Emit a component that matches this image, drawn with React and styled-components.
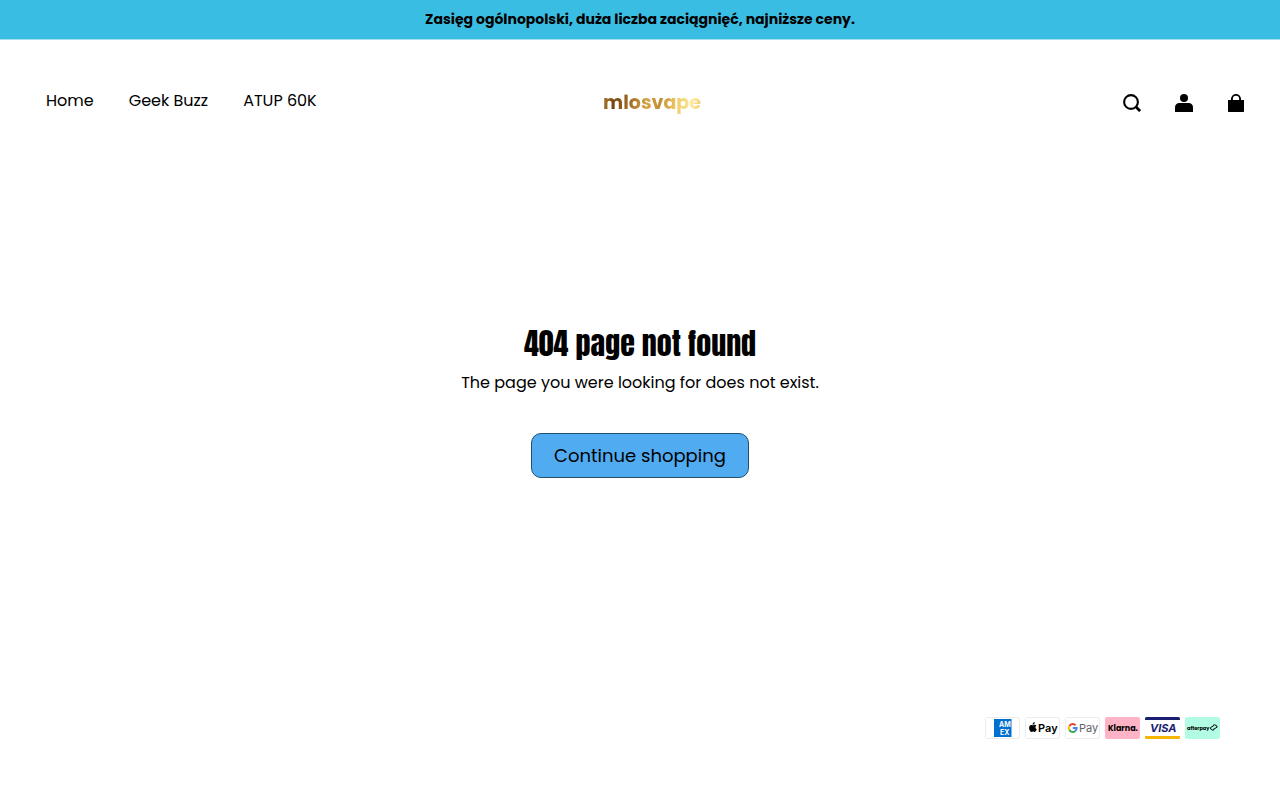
import React from "react";
import styled, { createGlobalStyle } from "styled-components";

const links = ["Home", "Geek Buzz", "ATUP 60K"];

export default function App() {
  return (
    <>
      <GlobalStyle />
      <Announcement>Zasięg ogólnopolski, duża liczba zaciągnięć, najniższe ceny.</Announcement>
      <Header>
        <Nav>
          {links.map((name) => (
            <NavLink href="#" key={name}>
              {name}
            </NavLink>
          ))}
        </Nav>
        <Logo href="#">mlosvape</Logo>
        <Icons>
          <IconButton type="button" aria-label="Search">
            <svg width="18" height="18" viewBox="0 0 18 18" fill="none" stroke="#000">
              <circle cx="8" cy="8" r="6.9" strokeWidth="2.1" />
              <path d="M12.6 12.6L17.1 17.1" strokeWidth="2.8" />
            </svg>
          </IconButton>
          <IconButton type="button" aria-label="Account">
            <svg width="18" height="18" viewBox="0 0 18 18">
              <circle cx="9" cy="4" r="4" />
              <path d="M0 18v-4.6C0 10.8 1.8 9 4.4 9h9.2C16.2 9 18 10.8 18 13.4V18z" />
            </svg>
          </IconButton>
          <IconButton type="button" aria-label="Cart">
            <svg width="18" height="18" viewBox="0 0 18 18">
              <path d="M4.9 7V5a4.1 4.1 0 0 1 8.2 0V7" fill="none" stroke="#000" strokeWidth="1.9" />
              <path d="M1 6h16v11.2a.8.8 0 0 1-.8.8H1.8a.8.8 0 0 1-.8-.8z" />
            </svg>
          </IconButton>
        </Icons>
      </Header>
      <Main>
        <Title>404 page not found</Title>
        <Message>The page you were looking for does not exist.</Message>
        <ShopButton type="button">Continue shopping</ShopButton>
      </Main>
      <Footer>
        <Card viewBox="0 0 35 22" role="img" aria-label="American Express">
          <CardFrame />
          <path d="M9 2h17.5v18H9z" fill="#006fcf" />
          <CardText x="14" y="10" size="7" fill="#fff">AM</CardText>
          <CardText x="15" y="18" size="7" fill="#fff">EX</CardText>
        </Card>
        <Card viewBox="0 0 35 22" role="img" aria-label="Apple Pay">
          <CardFrame />
          <path d="M8.6 8.2c.9-.5 2-.5 2.8.4-1.4.9-1.2 3 .4 3.7-.5 1.5-1.5 2.9-2.6 2.6-.8-.4-1.3-.4-2.1 0C5.3 15.5 3.7 12 4.2 10c.5-1.9 2.2-2.3 3.2-1.8.4.2.8.2 1.2 0zM7.6 7.7c-.1-1.5.9-2.5 2.1-2.8.1 1.500-.8 2.600-2.100 2.800z" />
          <CardText x="13" y="15" size="11" weight="600">Pay</CardText>
        </Card>
        <Card viewBox="0 0 35 22" role="img" aria-label="Google Pay">
          <CardFrame />
          <g fill="none" strokeWidth="2">
            <path d="M10.6 8.3A3.9 3.9 0 0 0 4.4 8.9" stroke="#ea4335" />
            <path d="M4.4 8.9a4 4 0 0 0 0 4.2" stroke="#fbbc04" />
            <path d="M4.4 13.1a3.9 3.9 0 0 0 5.9.8" stroke="#34a853" />
            <path d="M7.8 11h3.9a4 4 0 0 1-1.4 2.9" stroke="#4285f4" />
          </g>
          <CardText x="14" y="15" size="11" weight="400" fill="#5f6368">Pay</CardText>
        </Card>
        <Card viewBox="0 0 35 22" role="img" aria-label="Klarna">
          <rect width="35" height="22" rx="2" fill="#ffb3c7" />
          <BrandText x="3" y="14" size="8">Klarna.</BrandText>
        </Card>
        <Card viewBox="0 0 35 22" role="img" aria-label="Visa">
          <rect width="35" height="22" rx="1" fill="#fff" />
          <path d="M0 3V1.5Q0 0 1.5 0h32Q35 0 35 1.5V3z" fill="#1a1f71" />
          <path d="M0 19h35v1.5q0 1.500-1.500 1.500h-32Q0 22 0 20.500z" fill="#f7b600" />
          <CardText x="5" y="15" size="11" slant="italic" fill="#1a1f71">VISA</CardText>
        </Card>
        <Card viewBox="0 0 35 22" role="img" aria-label="Afterpay">
          <rect width="35" height="22" rx="2" fill="#b2fce4" />
          <BrandText x="2" y="13" size="5">afterpay</BrandText>
          <path d="M28.6 9.2l-.2-1.100 1-.4 2.600 1.400v1.200l-2.800 1.500M28.800 11.600l.1 1.200-1 .4-2.400-1.400v-1.200l2.600-1.500" fill="none" stroke="#000" />
        </Card>
      </Footer>
    </>
  );
}

function CardFrame() {
  return <rect x=".5" y=".5" width="34" height="21" rx="1.5" fill="#fff" stroke="#ededed" />;
}

const GlobalStyle = createGlobalStyle`
  * {
    box-sizing: border-box;
  }
  body {
    margin: 0;
    background: #fff;
    color: #000;
    font-family: Poppins, Inter, sans-serif;
    font-size: 16px;
    line-height: 24px;
  }
  #root {
    min-height: 100vh;
    display: flex;
    flex-direction: column;
  }
`;
const Announcement = styled.div`
  padding: 7px 20px 8px;
  background: #3abde3;
  border-bottom: 1px solid #a8dfee;
  text-align: center;
  font-size: 14px;
  font-weight: 700;
`;
const Header = styled.header`
  display: grid;
  grid-template-columns: 1fr auto 1fr;
  align-items: center;
  padding: 41px 22px 41px 46px;
`;
const Nav = styled.nav`
  display: flex;
  gap: 35px;
  padding-bottom: 4px;
`;
const NavLink = styled.a`
  color: #000;
  text-decoration: none;
`;
const Logo = styled.a`
  font-size: 19px;
  font-weight: 700;
  text-decoration: none;
  color: transparent;
  background: linear-gradient(100deg, #b98235 0%, #764711 12%, #a26b24 28%, #d6a346 45%, #c38b32 58%, #efca68 74%, #ffe99d 90%, #ecc766 100%);
  background-clip: text;
  -webkit-background-clip: text;
`;
const Icons = styled.div`
  display: flex;
  justify-content: flex-end;
  gap: 8px;
`;
const IconButton = styled.button`
  display: flex;
  align-items: center;
  justify-content: center;
  width: 44px;
  height: 44px;
  padding: 0;
  border: none;
  background: none;
  cursor: pointer;
`;
const Main = styled.main`
  flex: 1;
  display: flex;
  flex-direction: column;
  align-items: center;
  padding: 154px 20px 100px;
  text-align: center;
`;
const Title = styled.h1`
  margin: 0;
  font-family: Anton, "DejaVu Sans Condensed", sans-serif;
  font-size: 30px;
  font-weight: 400;
  line-height: 48px;
`;
const Message = styled.p`
  margin: 3px 0 38px;
`;
const ShopButton = styled.button`
  padding: 10px 22px;
  border: 1px solid #21506f;
  border-radius: 10px;
  background: #50abf1;
  color: #000;
  font-family: inherit;
  font-size: 18px;
  line-height: 23px;
  cursor: pointer;
`;
const Footer = styled.footer`
  display: flex;
  justify-content: flex-end;
  gap: 5px;
  padding: 0 60px 61px;
`;
const Card = styled.svg`
  width: 35px;
  height: 22px;
`;
const CardText = styled.text.withConfig({
  shouldForwardProp: (prop) => !["size", "weight", "slant"].includes(prop),
})`
  font-family: Inter, "Liberation Sans", sans-serif;
  font-size: ${(props) => props.size}px;
  font-weight: ${(props) => props.weight || 700};
  font-style: ${(props) => props.slant || "normal"};
`;
const BrandText = styled(CardText)`
  font-family: Poppins, Inter, sans-serif;
`;
